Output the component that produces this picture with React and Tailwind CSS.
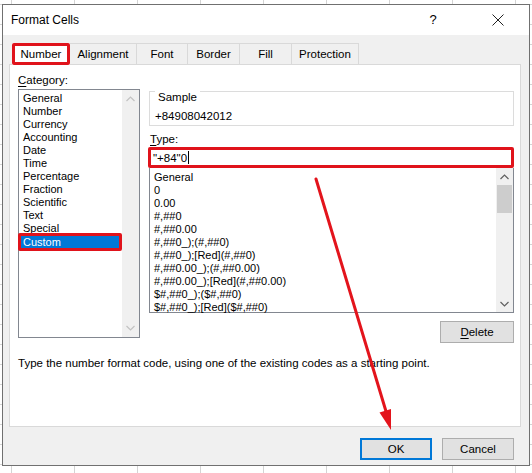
import React from 'react'

const categories = [
  'General', 'Number', 'Currency', 'Accounting', 'Date', 'Time',
  'Percentage', 'Fraction', 'Scientific', 'Text', 'Special', 'Custom',
]

const formats = [
  'General',
  '0',
  '0.00',
  '#,##0',
  '#,##0.00',
  '#,##0_);(#,##0)',
  '#,##0_);[Red](#,##0)',
  '#,##0.00_);(#,##0.00)',
  '#,##0.00_);[Red](#,##0.00)',
  '$#,##0_);($#,##0)',
  '$#,##0_);[Red]($#,##0)',
]

const tabs = [
  { label: 'Alignment', w: 'w-[68px]' },
  { label: 'Font', w: 'w-[52px]' },
  { label: 'Border', w: 'w-[53px]' },
  { label: 'Fill', w: 'w-[53px]' },
  { label: 'Protection', w: 'w-[68px]' },
]

function Chevron({ up, color = '#606060' }) {
  return (
    <svg width="9" height="6" viewBox="0 0 9 6">
      <path d={up ? 'M0.5 5 L4.5 1 L8.5 5' : 'M0.5 1 L4.5 5 L8.5 1'} fill="none" stroke={color} strokeWidth="1.2" />
    </svg>
  )
}

export default function App() {
  return (
    <div
      className="relative w-[532px] h-[473px] overflow-hidden bg-white bg-[linear-gradient(to_right,#d4d4d4_1px,transparent_1px),linear-gradient(to_bottom,#d4d4d4_1px,transparent_1px)] bg-[size:63px_20px] bg-[position:11px_4px] text-[11.5px] leading-[16px] text-black"
      style={{ fontFamily: '"Segoe UI", "Liberation Sans", Arial, sans-serif' }}
    >
      {/* Dialog window */}
      <div className="absolute left-[2px] top-[4px] w-[528px] h-[462px] border border-[#707070] bg-[#f0f0f0] flex flex-col">
        {/* Title bar */}
        <div className="h-[30px] bg-white flex items-center pl-[8px] shrink-0">
          <span className="flex-1 text-[12px]">Format Cells</span>
          <span className="w-[14px] text-center mr-[52px] text-[13px]">?</span>
          <svg width="12" height="12" viewBox="0 0 12 12" className="mr-[25px]">
            <path d="M0.5 0.5 L11.5 11.5 M11.5 0.5 L0.5 11.5" stroke="#222" strokeWidth="1" />
          </svg>
        </div>

        {/* Tabs */}
        <div className="flex items-end ml-[9px] mt-[7px] h-[22px] relative z-10">
          <div className="relative w-[58px] h-[22px] bg-white flex items-center justify-center -mb-[1px]">
            <span className="-mt-[1px]">Number</span>
            <span className="absolute inset-0 border-[3px] border-[#e0131b] rounded-[2px]" />
          </div>
          {tabs.map(t => (
            <div
              key={t.label}
              className={`${t.w} h-[21px] border border-b-0 border-[#d9d9d9] -ml-[1px] first:ml-0 bg-[#f0f0f0] flex items-center justify-center`}
            >
              {t.label}
            </div>
          ))}
        </div>

        {/* Tab panel */}
        <div className="ml-[6px] w-[512px] h-[363px] bg-white border border-[#d9d9d9] pl-[8px] pt-[7px] flex flex-col shrink-0">
          <div className="flex items-start">
            {/* Category column */}
            <div className="w-[122px] shrink-0">
              <div><u className="underline-offset-2">C</u>ategory:</div>
              <div className="mt-[1px] h-[249px] border border-[#828790] flex">
                <div className="flex-1 pt-[2px] pl-[1px] text-[11px]">
                  {categories.map(c => (
                    c === 'Custom' ? (
                      <div key={c} className="relative h-[14px] mr-[2px] bg-[#0078d7] text-white pl-[3px] leading-[14px]">
                        {c}
                        <span className="absolute -inset-[2px] border-[3px] border-[#e0131b] rounded-[2px]" />
                      </div>
                    ) : (
                      <div key={c} className="h-[13px] leading-[13px] pl-[3px]">{c}</div>
                    )
                  ))}
                </div>
                <div className="w-[17px] bg-[#f0f0f0] flex flex-col items-center justify-between py-[6px]">
                  <Chevron up color="#c2c2c2" />
                  <Chevron color="#c2c2c2" />
                </div>
              </div>
            </div>

            {/* Right column */}
            <div className="ml-[9px] w-[365px] flex flex-col">
              <div className="relative mt-[19px] h-[35px] border border-[#dcdcdc] pl-[5px] pt-[16px]">
                <span className="absolute left-[5px] -top-[3px] bg-white px-[3px]">Sample</span>
                +84908042012
              </div>

              <div className="mt-[5px] pl-[1px]"><u className="underline-offset-2">T</u>ype:</div>
              <div className="h-[21px] border-[3px] border-[#e0131b] rounded-[2px] flex items-center pl-[2px] -ml-[1px]">
                <span>"+84"0</span>
                <span className="w-[1px] h-[13px] bg-black ml-[1px]" />
              </div>

              <div className="h-[145px] border border-[#828790] border-t-0 flex">
                <div className="flex-1 pt-[3px] pl-[4px] text-[11px]">
                  {formats.map(f => (
                    <div key={f} className="h-[13px] leading-[13px] whitespace-nowrap">{f}</div>
                  ))}
                </div>
                <div className="w-[17px] bg-[#f0f0f0] flex flex-col items-center">
                  <div className="h-[17px] flex items-center justify-center"><Chevron up /></div>
                  <div className="w-[15px] h-[28px] bg-[#cdcdcd]" />
                  <div className="flex-1" />
                  <div className="h-[17px] flex items-center justify-center"><Chevron /></div>
                </div>
              </div>

              <div className="flex justify-end mt-[8px]">
                <button className="w-[74px] h-[22px] bg-[#e1e1e1] border border-[#adadad] text-[11.5px]">
                  <u className="underline-offset-2">D</u>elete
                </button>
              </div>
            </div>
          </div>

          <div className="mt-[12px]">Type the number format code, using one of the existing codes as a starting point.</div>
        </div>

        {/* Footer buttons */}
        <div className="flex justify-end gap-[10px] mt-[11px] pr-[15px]">
          <button className="w-[72px] h-[22px] bg-[#e1e1e1] border-2 border-[#0078d7] text-[11.5px]">OK</button>
          <button className="w-[72px] h-[22px] bg-[#e1e1e1] border border-[#adadad] text-[11.5px]">Cancel</button>
        </div>
      </div>

      {/* Red annotation arrow */}
      <svg className="absolute inset-0 pointer-events-none" width="532" height="473" viewBox="0 0 532 473">
        <line x1="316" y1="179" x2="386.5" y2="413" stroke="#e3141c" strokeWidth="3" strokeLinecap="round" />
        <polygon points="391,430 379.5,412.5 391,409" fill="#e3141c" />
      </svg>
    </div>
  )
}
